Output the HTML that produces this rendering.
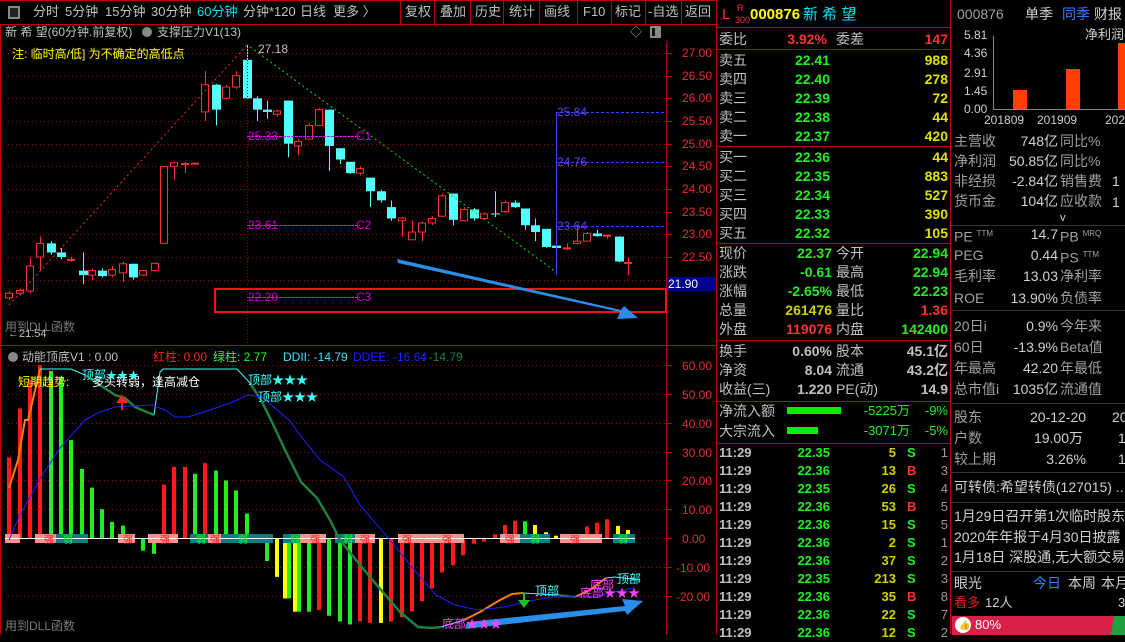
<!DOCTYPE html>
<html><head><meta charset="utf-8"><style>
body{margin:0;width:1125px;height:635px;background:#000;overflow:hidden;position:relative;font-family:"Liberation Sans","Noto Sans CJK SC",sans-serif;}
.t{position:absolute;white-space:nowrap;line-height:18px;height:18px;}
svg{position:absolute;left:0;top:0;}
</style></head><body>
<svg id="sv" width="1125" height="635"></svg>
<div id="tx"></div>
<script>
var S=[],T=[];
function t(x,y,s,c,fs,al,b){T.push('<div class="t" style="'+(al=='r'?'right:'+(1125-x)+'px;':'left:'+x+'px;')+'top:'+(y-9)+'px;color:'+(c||'#c0c0c0')+';font-size:'+(fs||14)+'px;'+(b?'font-weight:bold;':'')+'">'+s+'</div>');}
function r(x,y,w,h,c){S.push('<rect x="'+x+'" y="'+y+'" width="'+w+'" height="'+h+'" fill="'+c+'"/>');}
function l(x1,y1,x2,y2,c,w,d){S.push('<line x1="'+x1+'" y1="'+y1+'" x2="'+x2+'" y2="'+y2+'" stroke="'+c+'" stroke-width="'+(w||1)+'"'+(d?' stroke-dasharray="'+d+'"':'')+'/>');}
function pl(p,c,w,d){S.push('<polyline points="'+p+'" fill="none" stroke="'+c+'" stroke-width="'+(w||1)+'"'+(d?' stroke-dasharray="'+d+'"':'')+'/>');}
var R='#c00000';
l(0,24.5,716,24.5,R);l(0,0.5,716,0.5,R);
r(8,6,12,13,'#888');r(10,8,8,9,'#222');
var tb=[[33,'分时'],[65,'5分钟'],[105,'15分钟'],[151,'30分钟'],[197,'60分钟','#00e0ff'],[243,'分钟*120'],[300,'日线'],[333,'更多 〉']];
tb.forEach(function(a){t(a[0],12,a[1],a[2]||'#c0c0c0',13);});
[400,434,470,503,539,577,611,645,681].forEach(function(x){l(x+.5,0,x+.5,24,R);});
[[405,'复权'],[440,'叠加'],[475,'历史'],[509,'统计'],[544,'画线'],[583,'F10'],[615,'标记'],[648,'-自选'],[685,'返回']].forEach(function(a){t(a[0],12,a[1],'#c0c0c0',13);});
t(5,32,'新 希 望(60分钟.前复权)','#c0c0c0',12);
S.push('<circle cx="147" cy="32" r="5" fill="#888"/>');
t(157,32,'支撑压力V1(13)','#c0c0c0',12);
t(630,32,'◇','#aaa',12);r(650,26,11,12,'#888');r(652,28,7,8,'#111');r(655,28,4,8,'#888');
t(12,54,'注: 临时高/低] 为不确定的高低点','#ffff00',12);
l(666.5,42,666.5,635,R);l(0,345.5,716,345.5,R);l(716.5,0,716.5,635,R);l(0.5,24,0.5,635,R);
function py(p){return 53+(27-p)*45.33;}
[27,26.5,26,25.5,25,24.5,24,23.5,23,22.5,22].forEach(function(p){var y=py(p);l(0,Math.round(y)+.5,666,Math.round(y)+.5,'#a00000',1,'1,3');l(666,Math.round(y)+.5,672,Math.round(y)+.5,R);if(p>22.4)t(682,y,p.toFixed(2),'#e03030',12);});
r(667,277,49,14,'#000090');t(668,284,'21.90','#fff',12);
var C=[[9,21.6,21.7,21.75,21.55],[20,21.7,21.76,21.8,21.65],[30,21.75,22.3,22.5,21.7],[40,22.5,22.8,22.95,22.2],[51,22.8,22.6,22.85,22.55],[61,22.6,22.5,22.7,22.45],[71,22.45,22.45,22.5,22.4],[83,22.2,22.1,22.6,21.9],[92,22.1,22.2,22.25,22.0],[102,22.2,22.08,22.25,22.05],[112,22.1,22.22,22.3,22.05],[123,22.15,22.35,22.4,21.95],[133,22.35,22.05,22.35,22.0],[143,22.1,22.2,22.22,22.08],[155,22.2,22.36,22.38,22.18],[164,22.8,24.5,24.5,22.8],[174,24.5,24.58,24.6,24.2],[185,24.55,24.56,24.6,24.35],[195,24.55,24.57,24.58,24.54],[205,25.7,26.3,26.6,25.5],[216,26.3,25.75,26.32,25.4],[226,26.0,26.25,26.3,25.98],[236,26.25,26.5,26.6,26.2],[247,26.85,26.0,27.18,26.0],[257,26.0,25.75,26.05,25.5],[267,25.75,25.7,25.95,25.55],[277,25.65,25.72,25.75,25.6],[288,25.95,25.0,25.95,24.7],[298,24.95,25.05,25.1,24.75],[309,25.1,25.4,25.45,25.1],[319,25.4,25.75,25.78,25.38],[329,25.75,24.95,25.75,24.4],[340,24.9,24.65,24.9,24.55],[350,24.6,24.35,24.6,24.33],[360,24.35,24.45,24.5,24.3],[370,24.25,23.95,24.25,23.6],[381,23.95,23.75,23.98,23.7],[391,23.6,23.35,23.75,23.3],[402,23.3,23.36,23.38,22.95],[412,22.88,23.05,23.3,22.88],[422,23.05,23.25,23.28,22.85],[432,23.25,23.35,23.4,23.2],[442,23.4,23.85,23.9,23.38],[453,23.9,23.32,23.9,23.2],[464,23.3,23.55,23.6,23.28],[474,23.55,23.35,23.58,23.3],[484,23.35,23.45,23.48,23.33],[495,23.46,23.45,23.95,23.38],[505,23.5,23.7,23.75,23.48],[515,23.7,23.6,23.75,23.58],[525,23.57,23.2,23.57,23.1],[535,23.2,23.05,23.35,22.85],[546,23.12,22.72,23.12,22.7],[556,22.75,22.7,22.78,22.65],[567,22.68,22.7,22.8,22.65],[577,22.8,22.85,23.2,22.78],[587,22.85,23.02,23.05,22.85],[597,23.02,22.96,23.1,22.95],[607,22.97,22.98,23.0,22.9],[619,22.95,22.4,22.96,22.38],[628,22.37,22.38,22.5,22.1]];
C.forEach(function(c){var x=c[0],up=c[2]>=c[1],col=up?'#ff3030':'#54ffff';var y1=py(Math.max(c[1],c[2])),y2=py(Math.min(c[1],c[2]));l(x+.5,py(c[3]),x+.5,py(c[4]),col);var h=Math.max(1,y2-y1);if(up){S.push('<rect x="'+(x-3.5)+'" y="'+y1+'" width="7" height="'+h+'" fill="#000" stroke="'+col+'"/>');}else r(x-4,y1,9,h,col);});
pl('9,305 247,45','#e03030',1,'2,3');pl('250,47 556,272','#00e000',1,'2,3');
l(247.5,48,247.5,345,'#a00000',1,'1,2');
t(258,49,'27.18','#c0c0c0',12);
l(556.5,112,556.5,275,'#4040ff');
[[112,'25.84'],[162,'24.76'],[226,'23.64']].forEach(function(a){l(556,a[0]+.5,664,a[0]+.5,'#4040ff',1,'3,2');t(557,a[0],a[1],'#6040ff',12);});
[[136,'25.33','C1'],[225,'23.61','C2'],[297,'22.20','C3']].forEach(function(a){l(247,a[0]+.5,360,a[0]+.5,'#ff00ff',1,'3,1');t(248,a[0],a[1],'#d000d0',12);t(356,a[0],a[2],'#d000d0',12);});
S.push('<rect x="215" y="289" width="451" height="23" fill="none" stroke="#ff1010" stroke-width="2"/>');
S.push('<polygon points="397,259 398,263 620,312 617,319 638,318 624,306 621,310" fill="#2a8ee8"/>');
t(5,327,'用到DLL函数','#7a7a7a',12);t(8,334,'←21.54','#c0c0c0',11);
function iy(v){return 538-v*2.88;}
S.push('<circle cx="13" cy="357" r="5" fill="#888"/>');
t(22,357,'动能顶底V1 : 0.00','#c0c0c0',12);t(153,357,'红柱: 0.00','#ff2020',12);t(213,357,'绿柱: 2.77','#20ff20',12);t(283,357,'DDII: -14.79','#40e0ff',12);t(353,357,'DDEE: -16.64','#2020ff',12);t(422,357,': -14.79','#208040',12);
[60,50,40,30,20,10,0,-10,-20].forEach(function(v){var y=Math.round(iy(v))+.5;l(0,y,666,y,'#a00000',1,'1,3');l(666,y,672,y,R);t(v<0?676:682,y,v.toFixed(2),'#e03030',12);});
var B=[[9,'r',28],[20,'r',45],[30,'r',55],[40,'r',60],[51,'g',58],[61,'g',56],[71,'g',34],[82,'g',24],[92,'g',17.5],[102,'g',10],[112,'g',5.6],[123,'g',4.3],[133,'g',-1.5],[143,'g',-4.4],[154,'g',-5.5],[164,'r',18.6],[174,'r',24.7],[185,'r',24.7],[195,'g',22.3],[205,'r',26],[216,'g',23.4],[226,'g',20],[236,'g',16.5],[247,'g',8.5],[257,'g',0.5],[267,'g',-8],[277,'y',-13.5],[287,'yg',-21],[297,'yg',-25.6],[309,'g',-25.6],[319,'r',-25],[329,'g',-27],[340,'g',-29],[350,'g',-30],[360,'r',-29],[370,'r',-29.5],[381,'y',-29.5],[391,'r',-29],[402,'r',-27.5],[412,'r',-25.5],[422,'r',-22],[432,'r',-17.5],[442,'r',-12],[453,'r',-9.5],[463,'r',-6],[474,'r',-2],[484,'r',-1.3],[495,'r',1.3],[505,'r',4.5],[515,'r',6],[525,'g',5.8],[535,'y',4.5],[546,'y',2],[556,'y',0.8],[566,'y',1.3],[577,'g',0.8],[587,'r',4],[597,'r',5.3],[607,'r',6.5],[618,'y',4.2],[628,'y',2.8]];
var cm={r:'#ff1a1a',g:'#22ee22',y:'#ffff00'};
B.forEach(function(b){var y0=iy(0),y1=iy(b[2]),top=Math.min(y0,y1),h=Math.abs(y1-y0);if(b[1]=='yg'){r(b[0]-4,top,4,h,'#ffff00');r(b[0],top,4,h,'#22ee22');}else r(b[0]-2,top,4,h,cm[b[1]]);});
[[5,15,'#ff9090'],[35,25,'#ff9090'],[56,32,'#008080'],[118,17,'#ff9090'],[148,30,'#ff9090'],[190,18,'#008080'],[208,18,'#ff9090'],[221,52,'#008080'],[283,20,'#008080'],[300,26,'#ff9090'],[335,20,'#008080'],[355,20,'#ff9090'],[398,66,'#ff9090'],[500,20,'#ff9090'],[520,30,'#008080'],[560,42,'#ff9090'],[613,22,'#008080']].forEach(function(a){r(a[0],534,a[1],9,a[2]);});
l(5,538.5,635,538.5,'#ffffff',1);
[[44,'强','#ff2020'],[63,'弱','#20ff20'],[123,'强','#ff2020'],[160,'强','#ff2020'],[196,'弱','#20ff20'],[210,'强','#ff2020'],[238,'弱','#20ff20'],[290,'弱','#20ff20'],[310,'强','#ff2020'],[343,'弱','#20ff20'],[360,'强','#ff2020'],[402,'强','#ff2020'],[442,'强','#ff2020'],[505,'强','#ff2020'],[530,'弱','#20ff20'],[570,'强','#ff2020'],[618,'弱','#20ff20']].forEach(function(a){t(a[0],541,a[1],a[2],10);});
pl('9,488 18,460 25,420 28,420 34,395 40,369','#ff8000',2);
pl('40,369 71,369 85,375','#40ffff',1);
pl('85,375 100,385 115,395 125,398 135,407 154,415','#208040',2.5);
pl('154,415 160,372 163,369 237,369 250,383','#40ffff',1);
pl('250,383 262,402 271,420 285,450 301,482 317,498 330,520 340,540 360,565 381,590 400,612 418,627 432,628 441,627','#208040',2.5);
pl('441,627 464,620','#40ffff',1);pl('464,620 480,612 500,600 512,594 523,593','#ff8000',2);
pl('523,593 558,595','#40ffff',1);pl('558,595 575,597','#208040',2);pl('575,597 590,590 606,578','#ff8000',2);pl('606,578 615,577 640,580','#40ffff',1);
pl('9,540 20,515 41,477 60,448 85,420 100,412 115,407 152,405 165,410 175,417 188,417 210,410 230,403 248,395 262,397 289,420 300,435 320,460 344,477 360,505 390,540 410,565 436,595 455,605 477,610 505,607 530,601 551,597 592,597 634,588','#2020ff',1);
r(121,396,2,14,'#ff2020');S.push('<polygon points="116,403 122,395 128,403" fill="#ff2020"/>');
r(523,593,2,10,'#20c020');S.push('<polygon points="518,600 524,608 530,600" fill="#20c020"/>');
t(18,382,'短期趋势:','#ffff00',12);t(92,382,'多头转弱，逢高减仓','#ffffff',12);
t(82,375,'顶部<span style="font-size:11px">★★★</span>','#40ffff',12);t(248,380,'顶部★★★','#40ffff',12);t(258,397,'顶部★★★','#40ffff',12);
t(442,624,'底部<span style="color:#ff40ff">★★★</span>','#ff40ff',12);t(535,591,'顶部','#40ffff',12);t(617,579,'顶部','#40ffff',12);t(580,593,'底部★★★','#ff40ff',12);t(590,585,'底部','#ff40ff',12);
S.push('<polygon points="465,629 467,622 625,606 622,599 643,601 627,615 625,611" fill="#2a8ee8"/>');
t(5,626,'用到DLL函数','#7a7a7a',12);
l(716,27.5,950,27.5,R);l(716,49.5,950,49.5,R);l(716,146.5,950,146.5,R);l(716,243.5,950,243.5,R);l(716,340.5,950,340.5,R);l(716,401.5,950,401.5,R);l(716,443.5,950,443.5,R);l(950.5,0,950.5,635,R);
t(722,15,'L','#ff3030',15);t(737,8,'R','#ff3030',9);t(735,20,'300','#ff3030',9);t(750,15,'000876','#ffff00',15,0,1);t(803,15,'新 希 望','#00e0ff',15);
t(719,39,'委比');t(827,39,'3.92%','#ff3030',14,'r',1);t(836,39,'委差');t(948,39,'147','#ff3030',14,'r',1);
var ob=[['卖五','22.41','988'],['卖四','22.40','278'],['卖三','22.39','72'],['卖二','22.38','44'],['卖一','22.37','420']];
ob.forEach(function(a,i){var y=60+i*19;t(719,y,a[0]);t(830,y,a[1],'#20ee20',14,'r',1);t(948,y,a[2],'#e0e000',14,'r',1);});
ob=[['买一','22.36','44'],['买二','22.35','883'],['买三','22.34','527'],['买四','22.33','390'],['买五','22.32','105']];
ob.forEach(function(a,i){var y=157+i*19;t(719,y,a[0]);t(830,y,a[1],'#20ee20',14,'r',1);t(948,y,a[2],'#e0e000',14,'r',1);});
var G='#20ee20';
[['现价','22.37',G,'今开','22.94',G],['涨跌','-0.61',G,'最高','22.94',G],['涨幅','-2.65%',G,'最低','22.23',G],['总量','261476','#d0d000','量比','1.36','#ff3030'],['外盘','119076','#ff3030','内盘','142400',G]].forEach(function(a,i){var y=253+i*19;t(719,y,a[0]);t(832,y,a[1],a[2],14,'r',1);t(836,y,a[3]);t(948,y,a[4],a[5],14,'r',1);});
[['换手','0.60%','股本','45.1亿'],['净资','8.04','流通','43.2亿'],['收益(三)','1.220','PE(动)','14.9']].forEach(function(a,i){var y=351+i*19;t(719,y,a[0]);t(832,y,a[1],'#c0c0c0',14,'r',1);t(836,y,a[2]);t(948,y,a[3],'#c0c0c0',14,'r',1);});
t(719,411,'净流入额');r(787,407,54,7,'#00ee00');t(910,411,'-5225万',G,13,'r');t(948,411,'-9%',G,13,'r');
t(719,431,'大宗流入');r(787,427,31,7,'#00ee00');t(910,431,'-3071万',G,13,'r');t(948,431,'-5%',G,13,'r');
[['22.35','5','S'],['22.36','13','B'],['22.35','26','S'],['22.36','53','B'],['22.36','15','S'],['22.36','2','S'],['22.36','37','S'],['22.35','213','S'],['22.36','35','B'],['22.36','22','S'],['22.36','12','S']].forEach(function(a,i){var y=453+i*18;t(719,y,'11:29','#c0c0c0',13,0,1);t(830,y,a[0],G,13,'r',1);t(896,y,a[1],'#d0d000',13,'r',1);t(907,y,a[2],a[2]=='B'?'#ff3030':G,13,0,1);t(948,y,'13455123872'[i],'#999',13,'r');});
var W='#d0d0d0',A='#a0a0a0';
t(957,14,'000876',A,14);t(1025,14,'单季',W,14);t(1062,14,'同季','#3080ff',14);t(1094,14,'财报',W,14);
[['5.81',35],['4.36',53],['2.91',73],['1.45',91],['0.00',109]].forEach(function(a){t(964,a[1],a[0],W,12);});
l(993.5,36,993.5,110,'#888');l(993,109.5,1125,109.5,'#888');
r(1013,90,14,19,'#ff4000');r(1066,69,14,40,'#ff4000');r(1118,43,7,66,'#ff4000');
t(1085,35,'净利润(',W,13);
t(984,120,'201809',W,12);t(1037,120,'201909',W,12);t(1105,120,'202',W,12);
[['主营收','748亿','同比%'],['净利润','50.85亿','同比%'],['非经损','-2.84亿','销售费'],['货币金','104亿','应收款']].forEach(function(a,i){var y=141+i*20;t(954,y,a[0],A);t(1058,y,a[1],W,14,'r');t(1060,y,a[2],A);});
t(1112,181,'1',W);t(1112,202,'1',W);t(1060,218,'v',W,11);
l(951,225.5,1125,225.5,'#333');
t(954,234,'PE <sup style="font-size:8px">TTM</sup>',A);t(1058,234,'14.7',W,14,'r');t(1060,234,'PB <sup style="font-size:8px">MRQ</sup>',A);
t(954,255,'PEG',A);t(1058,255,'0.44',W,14,'r');t(1060,255,'PS <sup style="font-size:8px">TTM</sup>',A);
t(954,276,'毛利率',A);t(1058,276,'13.03',W,14,'r');t(1060,276,'净利率',A);
t(954,298,'ROE',A);t(1058,298,'13.90%',W,14,'r');t(1060,298,'负债率',A);
l(951,310.5,1125,310.5,'#333');
[['20日i','0.9%','今年来'],['60日','-13.9%','Beta值'],['年最高','42.20','年最低'],['总市值i','1035亿','流通值']].forEach(function(a,i){var y=326+i*21;t(954,y,a[0],A);t(1058,y,a[1],W,14,'r');t(1060,y,a[2],A);});
l(951,403.5,1125,403.5,'#333');
t(954,417,'股东',A);t(1030,417,'20-12-20',W,14);t(1112,417,'20',W);
t(954,438,'户数',A);t(1083,438,'19.00万',W,14,'r');t(1118,438,'1',W);
t(954,459,'较上期',A);t(1086,459,'3.26%',W,14,'r');t(1118,459,'1',W);
l(951,472.5,1125,472.5,'#333');
t(954,487,'可转债:希望转债(127015) ..',W);
l(951,502.5,1125,502.5,'#333');
t(954,516,'1月29日召开第1次临时股东',W);t(954,537,'2020年年报于4月30日披露',W);t(954,557,'1月18日 深股通,无大额交易',W);
l(951,571.5,1125,571.5,'#333');
t(954,583,'眼光',W);t(1033,583,'今日','#3080ff');t(1068,583,'本周',W);t(1101,583,'本月',W);
t(954,603,'看多','#e02020',13);t(985,603,'12人',W,13);t(1118,603,'3',W,13);
r(952,616,162,19,'#d8204a');S.push('<polygon points="1114,616 1125,616 1125,635 1111,635" fill="#20a040"/>');
S.push('<circle cx="963" cy="625" r="8" fill="#fff"/>');t(959,625,'👍','#d8204a',9);t(975,625,'80%','#fff',13);
document.getElementById('sv').innerHTML=S.join('');document.getElementById('tx').innerHTML=T.join('');
</script>
</body></html>
